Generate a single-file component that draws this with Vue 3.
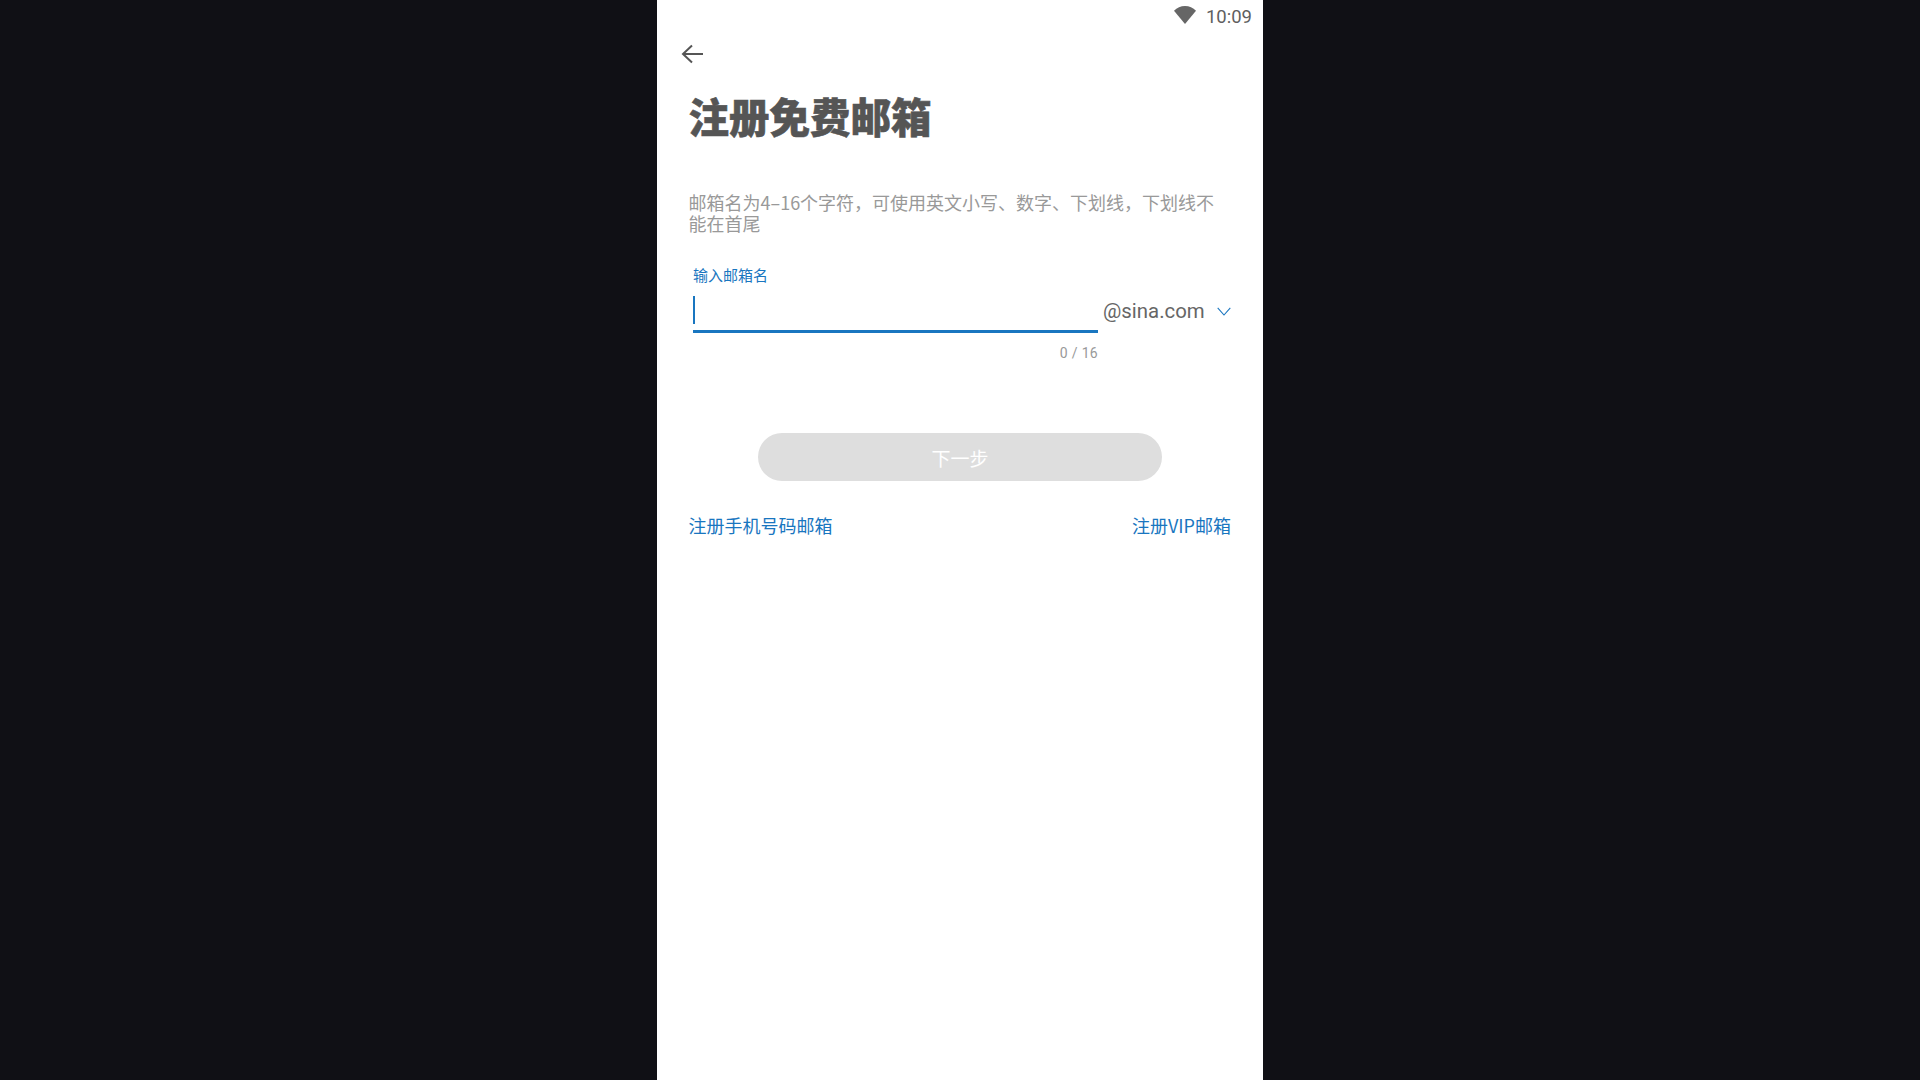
<template>
  <div class="page">
    <div class="phone">
      <div class="status-bar">
        <svg class="wifi" viewBox="0 0 21 17" width="22" height="18">
          <path d="M0 4.500C2.800 1.700 6.400 0 10.500 0S18.200 1.700 21 4.500L10.500 17z" fill="#666" />
        </svg>
        <span class="time">10:09</span>
      </div>

      <div class="back-row">
        <svg viewBox="0 0 22 20" width="22" height="20" fill="none" stroke="#555" stroke-width="2">
          <path d="M22 10H2" />
          <path d="M11 1.500 2 10l9 8.500" />
        </svg>
      </div>

      <div class="content">
        <h1 class="title">注册免费邮箱</h1>
        <p class="desc">邮箱名为4–16个字符&#xFF0C;可使用英文小写、数字、下划线&#xFF0C;下划线不能在首尾</p>

        <div class="field">
          <div class="input-col">
            <label class="label">输入邮箱名</label>
            <div class="input-line"><span class="cursor"></span></div>
            <div class="counter">{{ count }} / {{ maxLength }}</div>
          </div>
          <div class="domain">
            <span class="domain-text">@sina.com</span>
            <svg viewBox="0 0 14 9" width="14" height="9" fill="none" stroke="#1976c0" stroke-width="1.100">
              <path d="M.7.8 7 8l6.300-7.200" />
            </svg>
          </div>
        </div>

        <button class="next-btn" disabled>下一步</button>

        <div class="links">
          <a class="link">注册手机号码邮箱</a>
          <a class="link">注册VIP邮箱</a>
        </div>
      </div>
    </div>
  </div>
</template>

<script setup>
import { ref } from "vue";

const count = ref(0);
const maxLength = 16;
</script>

<style>
body {
  background: #101015;
}
</style>

<style scoped>
.page {
  display: flex;
  justify-content: center;
  height: 1080px;
  background: #101015;
  font-family: "Noto Sans CJK SC", "Noto Sans", sans-serif;
}

.phone {
  width: 606px;
  height: 1080px;
  background: #fff;
  overflow: hidden;
}

.status-bar {
  display: flex;
  justify-content: flex-end;
  align-items: center;
  height: 32px;
  padding-right: 11px;
  gap: 10px;
}

.wifi {
  margin-top: -2px;
}

.time {
  margin-top: 1px;
  font-family: Roboto, sans-serif;
  font-size: 18.500px;
  color: #5f5f5f;
}

.back-row {
  display: flex;
  align-items: center;
  height: 44px;
  padding-left: 24px;
}

.content {
  padding: 0 32px 0 31.500px;
}

.title {
  margin: 11px 0 0;
  font-size: 40.500px;
  font-weight: 900;
  line-height: 58px;
  color: #555;
  -webkit-text-stroke: 0.600px #555;
}

.desc {
  margin: 47px 0 0;
  font-size: 18px;
  line-height: 21px;
  color: #999;
}

.field {
  display: flex;
  margin: 30px 0 0 4.500px;
}

.input-col {
  flex: none;
  width: 405px;
}

.label {
  display: block;
  font-size: 15px;
  line-height: 22px;
  color: #1976c0;
}

.input-line {
  height: 34px;
  margin-top: 10px;
  border-bottom: 3px solid #1976c0;
}

.cursor {
  display: block;
  width: 2px;
  height: 28px;
  background: #1976c0;
}

.counter {
  margin-top: 10px;
  text-align: right;
  font-family: Roboto, sans-serif;
  font-size: 14px;
  line-height: 20px;
  letter-spacing: 0.300px;
  color: #999;
}

.domain {
  flex: none;
  display: flex;
  align-items: center;
  gap: 12px;
  height: 30px;
  margin: 32px 0 0 5px;
}

.domain-text {
  font-family: Roboto, sans-serif;
  font-size: 20.400px;
  color: #666;
}

.next-btn {
  display: block;
  width: 404px;
  height: 48px;
  margin: 70px auto 0 69.500px;
  border: none;
  border-radius: 24px;
  background: #dedede;
  color: #fff;
  font-family: inherit;
  font-size: 19px;
}

.links {
  display: flex;
  justify-content: space-between;
  margin-top: 31px;
}

.link {
  font-size: 18px;
  line-height: 26px;
  color: #1976c0;
}
</style>
